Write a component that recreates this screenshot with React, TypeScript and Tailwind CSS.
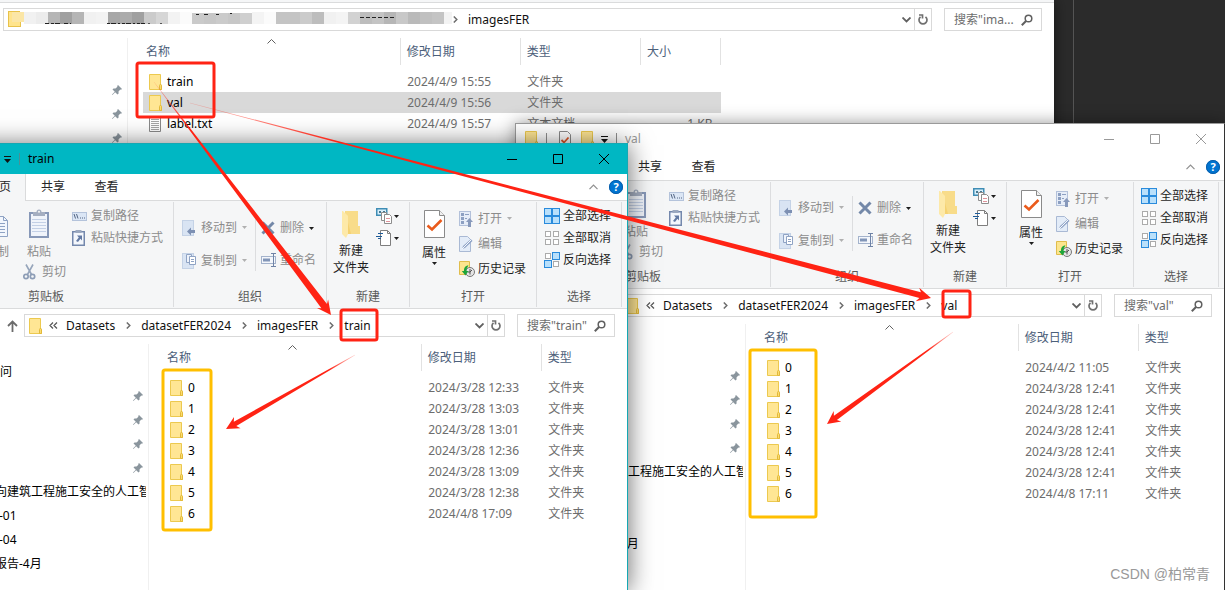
import React, { useId } from 'react';

interface FileRow {
  name: string;
  date: string;
  type: string;
  size?: string;
  kind?: 'folder' | 'text';
  selected?: boolean;
}

interface ExplorerProps {
  title: string;
  active?: boolean;
  hasRibbon?: boolean;
  path: string[];
  searchText: string;
  rows: FileRow[];
  showSize?: boolean;
  className: string;
}

const folderRows = (dates: string[]): FileRow[] =>
  dates.map((date, i) => ({ name: String(i), date, type: '文件夹' }));

const imagesRows: FileRow[] = [
  { name: 'train', date: '2024/4/9 15:55', type: '文件夹' },
  { name: 'val', date: '2024/4/9 15:56', type: '文件夹', selected: true },
  { name: 'label.txt', date: '2024/4/9 15:57', type: '文本文档', size: '1 KB', kind: 'text' },
];

const trainRows = folderRows([
  '2024/3/28 12:33',
  '2024/3/28 13:03',
  '2024/3/28 13:01',
  '2024/3/28 12:36',
  '2024/3/28 13:09',
  '2024/3/28 12:38',
  '2024/4/8 17:09',
]);

const valRows = folderRows([
  '2024/4/2 11:05',
  '2024/3/28 12:41',
  '2024/3/28 12:41',
  '2024/3/28 12:41',
  '2024/3/28 12:41',
  '2024/3/28 12:41',
  '2024/4/8 17:11',
]);

/* ---------- icons ---------- */

const FolderIcon: React.FC = () => (
  <svg className="w-[13px] h-4 shrink-0" viewBox="0 0 13 16" aria-hidden="true">
    <path d="M.5.5h11v10l1 1v4H.5z" fill="#ffe694" stroke="#ecc94f" />
    <path d="M10.500 15.500v-4l1-1.500 1 1.500v4z" fill="#fbdc6f" stroke="#e2b93b" />
  </svg>
);

const TextFileIcon: React.FC = () => (
  <svg className="w-[13px] h-4 shrink-0" viewBox="0 0 13 16" aria-hidden="true">
    <path d="M.5.5h11v15H.5z" fill="#fff" stroke="#8a8a8a" />
    <path d="M2 3.500h8M2 5.500h8M2 7.500h8M2 9.500h8M2 11.500h8M2 13.500h8" stroke="#a5a5a5" />
  </svg>
);

const PinIcon: React.FC = () => (
  <svg className="w-[10px] h-[10px] shrink-0" viewBox="0 0 10 10" aria-hidden="true">
    <path d="M6 0l4 4-1 .8-.7-.2-1.800 1.900.1 2L5.500 9.500 3.200 7.200.4 10 0 9.600l2.800-2.800L.5 4.500 1.500 3.400l2 .1L5.400 1.700 5.200 1z" fill="#8a959d" />
  </svg>
);

const CaretDown: React.FC<{ className?: string }> = ({ className = 'text-[#1e1e1e]' }) => (
  <svg className={`w-[5px] h-[3px] shrink-0 ${className}`} viewBox="0 0 5 3" aria-hidden="true">
    <path d="M0 0h5L2.500 3z" fill="currentColor" />
  </svg>
);

const CrumbArrow: React.FC = () => (
  <svg className="w-[5px] h-[7px] ml-[11px] mr-[10px] shrink-0" viewBox="0 0 5 7" aria-hidden="true">
    <path d="M.8.5l3 3-3 3" fill="none" stroke="#6d6d6d" strokeWidth="1.500" />
  </svg>
);

const ClipboardIcon: React.FC = () => (
  <svg className="w-5 h-[29px]" viewBox="0 0 20 29" aria-hidden="true">
    <rect x="1" y="4" width="18" height="24" fill="#f0f4fb" stroke="#8798b8" strokeWidth="2" />
    <path d="M3 10.500h14M3 13.500h14M3 16.500h14M3 19.500h14M3 22.500h14" stroke="#c3d0e6" />
    <path d="M4 3h3.500a2.500 2.500 0 015 0H16v4H4z" fill="#a4aec1" />
    <circle cx="10" cy="2.800" r="1" fill="#f5f6f7" />
  </svg>
);

const CopyIcon: React.FC = () => (
  <svg className="w-6 h-[29px]" viewBox="0 0 24 29" aria-hidden="true">
    <path d="M1.500 2.500h9l4 4v15h-13z" fill="#eaf0f9" stroke="#9fb0cc" />
    <path d="M9.500 7.500h9l4 4v16h-13z" fill="#f3f7fd" stroke="#8fa3c4" />
    <path d="M18.500 7.500v4h4M12 14.500h8M12 17.500h8M12 20.500h8M12 23.500h8" fill="none" stroke="#8fa3c4" />
  </svg>
);

const ScissorsIcon: React.FC = () => (
  <svg className="w-[13px] h-4" viewBox="0 0 13 16" aria-hidden="true">
    <path d="M3 .5l5.500 10M10 .5l-5.500 10" stroke="#96a5bb" strokeWidth="1.600" />
    <circle cx="3" cy="12.500" r="2.200" fill="none" stroke="#8d9db6" strokeWidth="1.700" />
    <circle cx="9.500" cy="12.500" r="2.200" fill="none" stroke="#8d9db6" strokeWidth="1.700" />
  </svg>
);

const CopyPathIcon: React.FC = () => (
  <svg className="w-[15px] h-[9px]" viewBox="0 0 15 9" aria-hidden="true">
    <rect x=".5" y=".5" width="14" height="8" fill="#dbe6f5" stroke="#b4c3db" />
    <path d="M2 2l1.500 4.500M4.500 2L6 6.500" stroke="#536583" />
    <path d="M8 6h1M10 6h1M12 6h1" stroke="#536583" />
  </svg>
);

const PasteShortcutIcon: React.FC = () => (
  <svg className="w-[13px] h-4" viewBox="0 0 13 16" aria-hidden="true">
    <rect x=".75" y="1.750" width="11.500" height="13.500" fill="#f4f7fc" stroke="#7488ad" strokeWidth="1.500" />
    <rect x="3.500" y="0" width="6" height="3" fill="#9ba8bf" />
    <path d="M5 5.500h5v5L8.400 8.800 6 12 4 11l2.800-3.600z" fill="#6279a3" />
  </svg>
);

const MoveToIcon: React.FC = () => (
  <svg className="w-[13px] h-4" viewBox="0 0 13 16" aria-hidden="true">
    <rect x=".5" y=".5" width="11" height="15" fill="#d9e4f3" stroke="#c4d2e6" />
    <path d="M5 11.500l4-4v2.500h4v3H9v2.500z" fill="#7d90b3" />
  </svg>
);

const CopyToIcon: React.FC = () => (
  <svg className="w-[14px] h-4" viewBox="0 0 14 16" aria-hidden="true">
    <rect x=".5" y=".5" width="11" height="15" fill="#d9e4f3" stroke="#c4d2e6" />
    <path d="M4.500 1.500h5v8h-5z" fill="#eef3fb" stroke="#8fa3c4" />
    <path d="M7.500 3.500h6v8h-6z" fill="#fff" stroke="#8fa3c4" />
    <path d="M9 6.500h3M9 8.500h3" stroke="#8fa3c4" />
  </svg>
);

const DeleteIcon: React.FC = () => (
  <svg className="w-[14px] h-[14px]" viewBox="0 0 14 14" aria-hidden="true">
    <path d="M1.500 1.500l11 11M12.500 1.500l-11 11" stroke="#7388a8" strokeWidth="3" />
  </svg>
);

const RenameIcon: React.FC = () => (
  <svg className="w-4 h-[14px]" viewBox="0 0 16 14" aria-hidden="true">
    <rect x=".5" y="3.500" width="14" height="7" fill="#f4f7fc" stroke="#a4b3cc" />
    <rect x="2" y="5.500" width="7" height="3" fill="#8296b8" />
    <path d="M10 .5h5M10 13.500h5M12.500.5v13" stroke="#6f83a6" />
  </svg>
);

const NewFolderIcon: React.FC = () => (
  <svg className="w-[18px] h-7" viewBox="0 0 18 28" aria-hidden="true">
    <path d="M3 1h13v15h2v8H5z" fill="#f5d271" />
    <path d="M3 1h13v15h2v8H9z" fill="#f8dc8a" />
    <path d="M0 1h1l5 5v18l-2 4-4-4z" fill="#fde9a9" />
  </svg>
);

const NewItemIcon: React.FC = () => (
  <svg className="w-4 h-4" viewBox="0 0 16 16" aria-hidden="true">
    <rect x=".75" y=".75" width="10" height="6.500" fill="#d8eefa" stroke="#3f8db5" strokeWidth="1.500" />
    <path d="M3 3h2v2H3zM7 3h2v2H7z" fill="#46788f" />
    <path d="M5.500 4.500h5v8h-5z" fill="#fff" stroke="#8d8d8d" />
    <path d="M8.500 6.500h5l2 2v7h-7z" fill="#fff" stroke="#8d8d8d" />
    <path d="M10 10.500h4M10 13.500h4" stroke="#e0939b" />
  </svg>
);

const EasyAccessIcon: React.FC = () => (
  <svg className="w-4 h-4" viewBox="0 0 16 16" aria-hidden="true">
    <path d="M4.500.5h7l3 3v12h-10z" fill="#fff" stroke="#7e7e7e" />
    <path d="M11.500.5v3h3" fill="none" stroke="#7e7e7e" />
    <path d="M2 3.500h5M0 6.500h6M2 8.500h3" stroke="#1f5c99" />
  </svg>
);

const PropertiesIcon: React.FC = () => (
  <svg className="w-[21px] h-[28px]" viewBox="0 0 21 28" aria-hidden="true">
    <path d="M.5.5h15l5 5v22H.5z" fill="#fff" stroke="#8a8a8a" />
    <path d="M15.500.5v5h5" fill="#f0f0f0" stroke="#8a8a8a" />
    <path d="M3.500 15.500l4.500 4L17.500 10" fill="none" stroke="#ea5b1c" strokeWidth="2.600" />
  </svg>
);

const OpenIcon: React.FC = () => (
  <svg className="w-[14px] h-4" viewBox="0 0 14 16" aria-hidden="true">
    <rect x=".5" y=".5" width="11" height="14" fill="#e6edf8" stroke="#b3c1da" />
    <path d="M2 2h3v3H2zM2 6h3v3H2zM2 10h3v3H2z" fill="#8da0c2" />
    <path d="M6 3.500h4M6 7.500h2" stroke="#8da0c2" />
    <path d="M10.500 7l3.500 4h-2v5H9v-5H7z" fill="#8799bb" />
  </svg>
);

const EditIcon: React.FC = () => (
  <svg className="w-[14px] h-4" viewBox="0 0 14 16" aria-hidden="true">
    <path d="M.5.5h8l3 3v12H.5z" fill="#e3ecf8" stroke="#a9b9d4" />
    <path d="M3 13l1-3 8-7 1.500 2L6 12z" fill="#91a5c7" />
    <path d="M3 13l9.500-9.500" stroke="#f5f8fd" />
  </svg>
);

const HistoryIcon: React.FC = () => (
  <svg className="w-4 h-4" viewBox="0 0 16 16" aria-hidden="true">
    <path d="M.5.5h10v13H.5z" fill="#fce58e" stroke="#e0bd4c" />
    <circle cx="11" cy="11" r="4.500" fill="#e5e5e5" stroke="#777" />
    <path d="M11 8v3l2-2M9 11h2M11 11v2.500" stroke="#555" fill="none" />
    <path d="M9.500 4.500C6 4.500 4.800 7 5 10H2.800l3.600 4.500L9.500 10H7.500c0-2 .5-3.500 2-5.500z" fill="#1ea53a" />
  </svg>
);

const SelectIcon: React.FC<{ mode: 'all' | 'none' | 'invert' }> = ({ mode }) => {
  const cells = [[0, 0], [8, 0], [0, 8], [8, 8]];
  return (
    <svg className="w-4 h-4" viewBox="0 0 16 16" aria-hidden="true">
      {cells.map(([x, y], i) => {
        const on = mode === 'all' || (mode === 'invert' && (i === 1 || i === 2));
        return on ? (
          <rect key={i} x={x + 0.5} y={y + 0.5} width="7" height="7" fill="#b9e0fb" stroke="#2a8bdc" />
        ) : (
          <rect key={i} x={x + 1.5} y={y + 1.5} width="5" height="5" fill="#fff" stroke="#ababab" />
        );
      })}
    </svg>
  );
};

/* ---------- ribbon ---------- */

const RibbonGroup: React.FC<{ label: string; className: string; children: React.ReactNode }> = ({ label, className, children }) => (
  <div className={`flex flex-col my-px border-r border-[#dcdddf] shrink-0 ${className}`}>
    <div className="flex flex-1">{children}</div>
    <div className="h-4 leading-4 mb-[2px] text-center text-[#5a5a5a]">{label}</div>
  </div>
);

interface RibbonButtonProps {
  icon: React.ReactNode;
  label: string;
  disabled?: boolean;
  caret?: boolean;
  className?: string;
}

const RibbonButton: React.FC<RibbonButtonProps> = ({ icon, label, disabled, caret, className = 'h-[22px]' }) => (
  <button
    type="button"
    disabled={disabled}
    className={`flex items-center whitespace-nowrap ${disabled ? 'text-[#8c8c8c]' : 'text-[#1e1e1e]'} ${className}`}
  >
    <span className="w-[19px] flex items-center shrink-0">{icon}</span>
    {label}
    {caret && <span className="ml-[5px]"><CaretDown className={disabled ? 'text-[#b0b0b0]' : 'text-[#1e1e1e]'} /></span>}
  </button>
);

const Ribbon: React.FC = () => (
  <div className="flex h-[108px] bg-[#f5f6f7] border-b border-[#dadbdc] shrink-0">
    <RibbonGroup label="剪贴板" className="w-[255px]">
      <div className="flex flex-1 justify-end pr-[10px] pt-[3px]">
        <button type="button" disabled className="w-[46px] flex flex-col items-center self-start pt-1 text-[#8c8c8c]">
          <CopyIcon />
          <span className="mt-[6px] leading-4">复制</span>
        </button>
        <div className="w-[52px]">
          <button type="button" disabled className="w-[38px] flex flex-col items-center pt-1 text-[#8c8c8c]">
            <ClipboardIcon />
            <span className="mt-[6px] leading-4">粘贴</span>
          </button>
          <RibbonButton icon={<ScissorsIcon />} label="剪切" disabled className="h-[22px] pl-[3px] mt-px" />
        </div>
        <div>
          <RibbonButton icon={<CopyPathIcon />} label="复制路径" disabled />
          <RibbonButton icon={<PasteShortcutIcon />} label="粘贴快捷方式" disabled />
        </div>
      </div>
    </RibbonGroup>

    <RibbonGroup label="组织" className="w-[153px]">
      <div className="pt-[9px] pl-2">
        <RibbonButton icon={<MoveToIcon />} label="移动到" disabled caret className="h-[33px]" />
        <RibbonButton icon={<CopyToIcon />} label="复制到" disabled caret className="h-[33px]" />
      </div>
      <div className="mt-[14px] ml-2 pl-[5px] h-[55px] border-l border-[#dcdddf]">
        <button type="button" className="flex items-center h-6 whitespace-nowrap text-[#8c8c8c]">
          <span className="w-[19px] flex items-center"><DeleteIcon /></span>
          删除
          <span className="ml-[5px]"><CaretDown /></span>
        </button>
        <RibbonButton icon={<RenameIcon />} label="重命名" disabled className="h-6 mt-2" />
      </div>
    </RibbonGroup>

    <RibbonGroup label="新建" className="w-[83px]">
      <button type="button" className="w-[48px] flex flex-col items-center self-start pt-2 text-[#1e1e1e]">
        <NewFolderIcon />
        <span className="mt-1 leading-[17px]">新建<br />文件夹</span>
      </button>
      <div className="pt-[3px] pl-px">
        <button type="button" aria-label="新建项目" className="flex items-center gap-[2px] h-[22px]">
          <NewItemIcon />
          <CaretDown />
        </button>
        <button type="button" aria-label="轻松访问" className="flex items-center gap-[2px] h-[22px]">
          <EasyAccessIcon />
          <CaretDown />
        </button>
      </div>
    </RibbonGroup>

    <RibbonGroup label="打开" className="w-[127px]">
      <button type="button" className="w-[48px] flex flex-col items-center self-start pt-2 text-[#1e1e1e]">
        <PropertiesIcon />
        <span className="mt-[7px] leading-4">属性</span>
        <CaretDown className="mt-px text-[#1e1e1e]" />
      </button>
      <div className="pt-1 pl-px">
        <RibbonButton icon={<OpenIcon />} label="打开" disabled caret className="h-[25px]" />
        <RibbonButton icon={<EditIcon />} label="编辑" disabled className="h-[25px]" />
        <RibbonButton icon={<HistoryIcon />} label="历史记录" className="h-[25px]" />
      </div>
    </RibbonGroup>

    <RibbonGroup label="选择" className="w-[85px]">
      <div className="pt-[3px] pl-[7px]">
        <RibbonButton icon={<SelectIcon mode="all" />} label="全部选择" />
        <RibbonButton icon={<SelectIcon mode="none" />} label="全部取消" />
        <RibbonButton icon={<SelectIcon mode="invert" />} label="反向选择" />
      </div>
    </RibbonGroup>
  </div>
);

/* ---------- window parts ---------- */

const TitleBar: React.FC<{ title: string; active?: boolean }> = ({ title, active }) => (
  <div className={`flex items-center h-[30px] shrink-0 ${active ? 'bg-[#00b7c3] text-black' : 'bg-white text-[#999]'}`}>
    <div className="flex items-center flex-1 pl-[9px]">
      <FolderIcon />
      <span className="w-px h-3 bg-[#8f8f8f] mx-2" />
      <button type="button" aria-label="属性" className="ml-1">
        <svg className="w-3 h-4" viewBox="0 0 12 16" aria-hidden="true">
          <path d="M.5.5h8l3 3v12H.5z" fill="#fff" stroke="#8a8a8a" />
          <path d="M2.500 9l2.500 2.500L9.500 6.500" fill="none" stroke="#e0582a" strokeWidth="1.800" />
        </svg>
      </button>
      <button type="button" aria-label="新建文件夹" className="ml-[10px]"><FolderIcon /></button>
      <button type="button" aria-label="自定义快速访问工具栏" className="ml-[7px]">
        <svg className="w-[7px] h-[7px]" viewBox="0 0 7 7" aria-hidden="true">
          <path d="M0 0h7v1H0zM0 3h7L3.500 7z" fill="#111" />
        </svg>
      </button>
      <span className={`w-px h-3 mx-2 ${active ? 'bg-[#4d8f94]' : 'bg-[#8f8f8f]'}`} />
      <h2>{title}</h2>
    </div>
    <button type="button" aria-label="最小化" className="w-[46px] h-full flex items-center justify-center">
      <svg className="w-[10px] h-[10px]" viewBox="0 0 10 10" stroke="currentColor" aria-hidden="true"><path d="M0 5.500h10" /></svg>
    </button>
    <button type="button" aria-label="最大化" className="w-[46px] h-full flex items-center justify-center">
      <svg className="w-[10px] h-[10px]" viewBox="0 0 10 10" stroke="currentColor" fill="none" aria-hidden="true"><path d="M.5.5h9v9h-9z" /></svg>
    </button>
    <button type="button" aria-label="关闭" className="w-[46px] h-full flex items-center justify-center">
      <svg className="w-[10px] h-[10px]" viewBox="0 0 10 10" stroke="currentColor" aria-hidden="true"><path d="M0 0l10 10M10 0L0 10" /></svg>
    </button>
  </div>
);

const TabBar: React.FC = () => (
  <div className="flex h-[27px] shrink-0 bg-white text-[#262626]">
    <div className="w-[54px] border-b border-[#dadbdc]" />
    <button type="button" className="w-[53px] pb-px bg-[#f5f6f7] border-r border-[#dadbdc]">主页</button>
    <button type="button" className="w-[54px] border-b border-[#dadbdc]">共享</button>
    <button type="button" className="w-[53px] border-b border-[#dadbdc]">查看</button>
    <div className="flex flex-1 items-center justify-end gap-[11px] pr-1 border-b border-[#dadbdc]">
      <button type="button" aria-label="折叠功能区">
        <svg className="w-[9px] h-[6px]" viewBox="0 0 9 6" fill="none" stroke="#8f8f8f" strokeWidth="1.200" aria-hidden="true"><path d="M.5 5.200l4-4 4 4" /></svg>
      </button>
      <button type="button" aria-label="帮助" className="w-[14px] h-[14px] rounded-full bg-[#0074d1] outline outline-[#0a5da8] -outline-offset-1 text-white font-bold text-[11px] leading-[14px]">?</button>
    </div>
  </div>
);

// pixelated strip over the private part of the path
const MOSAIC = [
  '#fbe6a6', '#f1f1f1', '#ececec', '#b5b5b5', '#a0a0a0', '#b5b5b5', '#f1f1f1', '#f3f3f3', '#a7a7a7', '#acacac', '#a0a0a0',
  '#cbcbcb', '#d6d6d6', '#f3f3f3', '#fbfbfb', '#cacaca', '#c7c7c7', '#cbcbcb', '#c7c7c7', '#cfcfcf', '#f4f4f4', '#fbfbfb',
  '#c4c4c4', '#c4c4c4', '#cbcbcb', '#bdbdbd', '#f1f1f1', '#f4f4f4', '#d2d2d2', '#bdbdbd', '#c4c4c4', '#b6b6b6', '#c8c8c8',
  '#bababa', '#c0c0c0', '#c4c4c4', '#f3f3f3',
];

const MosaicPath: React.FC = () => (
  <svg className="w-[448px] h-[21px] shrink-0" viewBox="0 0 448 21" shapeRendering="crispEdges" aria-hidden="true">
    <path d="M4.500 2.500h11v10l1 1v4h-12z" fill="#ffe48c" stroke="#e8c24a" />
    {MOSAIC.map((fill, i) => (
      <rect key={i} x={8 + i * 12} y="3" width={i === 36 ? 8 : 12} height={i === 0 ? 10 : 12} fill={fill} />
    ))}
    <path d="M41 14.500h26" stroke="#222" strokeDasharray="4 2 3 1 5 4" />
    <path d="M103 14.500h38" stroke="#222" strokeDasharray="3 1 5 2 2 2" />
    <path d="M144 14.500h2M156 14.500h2" stroke="#555" />
    <path d="M188 3.500h60" stroke="#fff" />
    <path d="M192 5.500h3M200 5.500h4M212 5.500h3M226 4.500h2" stroke="#222" />
    <path d="M356 8.500h34" stroke="#222" strokeDasharray="4 2" />
  </svg>
);

const AddressRow: React.FC<{ path: string[]; searchText: string; masked?: boolean }> = ({ path, searchText, masked }) => (
  <div className="flex items-center h-[33px] pl-[88px] pr-3 shrink-0">
    <button type="button" aria-label="上移" className="w-[17px] flex">
      <svg className="w-[11px] h-3" viewBox="0 0 11 12" fill="none" stroke="#6b6b6b" strokeWidth="1.800" aria-hidden="true"><path d="M5.500 12V1.500M1 6l4.500-4.500L10 6" /></svg>
    </button>
    <div className="flex flex-1 h-[23px] border border-[#d9d9d9] text-[#111]">
      {masked ? (
        <MosaicPath />
      ) : (
        <span className="flex items-center pl-1">
          <FolderIcon />
          <svg className="w-[9px] h-[7px] ml-[7px] mr-2" viewBox="0 0 9 7" fill="none" stroke="#555" strokeWidth="1.200" aria-hidden="true"><path d="M4 .5l-3 3 3 3M8 .5l-3 3 3 3" /></svg>
        </span>
      )}
      <nav className="flex flex-1 items-center" aria-label="路径">
        {path.map((part, i) => (
          <React.Fragment key={part}>
            {(i > 0 || masked) && <span className={masked ? '-ml-[10px]' : ''}><CrumbArrow /></span>}
            <a href={`#${part}`}>{part}</a>
          </React.Fragment>
        ))}
      </nav>
      <button type="button" aria-label="以前的位置" className="w-4 flex items-center justify-center">
        <svg className="w-[9px] h-[6px]" viewBox="0 0 9 6" fill="none" stroke="#606060" strokeWidth="1.800" aria-hidden="true"><path d="M.5.5l4 4 4-4" /></svg>
      </button>
      <button type="button" aria-label="刷新" className="w-[17px] flex items-center justify-center border-l border-[#d9d9d9]">
        <svg className="w-[10px] h-[11px]" viewBox="0 0 10 11" fill="none" stroke="#707070" strokeWidth="1.700" aria-hidden="true">
          <path d="M7.500 2.800a4 4 0 11-5 0" />
          <path d="M1 1h3.500v3.500" />
        </svg>
      </button>
    </div>
    <div className="flex items-center w-[98px] h-[23px] ml-3 pl-[9px] pr-2 border border-[#d9d9d9]">
      <input
        type="text"
        aria-label="搜索"
        placeholder={searchText}
        className="flex-1 min-w-0 bg-transparent outline-none placeholder:text-[#6d6d6d]"
      />
      <svg className="w-3 h-3 shrink-0" viewBox="0 0 12 12" fill="none" stroke="#606060" aria-hidden="true">
        <circle cx="7.500" cy="4.500" r="3.300" strokeWidth="1.500" />
        <path d="M5 7L.8 11.200" strokeWidth="2" />
      </svg>
    </div>
  </div>
);

const NavPane: React.FC = () => (
  <nav className="w-[230px] shrink-0 mt-[2px] pt-4 pr-[2px] border-r border-[#f0f0f0] text-black overflow-hidden">
    <div className="h-6 flex items-center pl-[45px]">快速访问</div>
    {[0, 1, 2, 3].map(i => (
      <div key={i} className="h-6 flex items-center justify-end pb-px pr-[3px]"><PinIcon /></div>
    ))}
    <div className="h-6 flex items-center pl-16 whitespace-nowrap overflow-hidden">面向建筑工程施工安全的人工智能</div>
    <div className="h-6 flex items-center pl-20">-01</div>
    <div className="h-6 flex items-center pl-20">-04</div>
    <div className="h-6 flex items-center pl-[76px]">报告-4月</div>
  </nav>
);

const FileTable: React.FC<{ rows: FileRow[]; showSize?: boolean }> = ({ rows, showSize }) => (
  <div className="flex-1 min-w-0 overflow-hidden pl-[15px] pt-[2px]">
    <table className={`table-fixed border-collapse text-left ${showSize ? 'w-[578px]' : 'w-[498px]'}`}>
      <thead>
        <tr className="h-[27px] text-[#4c607a]">
          <th className="w-[257px] pl-[3px] font-normal relative">
            名称
            <svg className="absolute left-1/2 top-px -ml-1 w-[9px] h-[5px]" viewBox="0 0 9 5" fill="none" stroke="#606060" aria-hidden="true"><path d="M.5 4.500l4-4 4 4" /></svg>
          </th>
          <th className="w-[120px] pl-[6px] font-normal border-l border-[#e2e2e2]">修改日期</th>
          <th className={`w-[120px] pl-[6px] font-normal border-l border-[#e2e2e2] ${showSize ? '' : 'border-r'}`}>类型</th>
          {showSize && <th className="w-20 pl-[6px] font-normal border-x border-[#e2e2e2]">大小</th>}
        </tr>
      </thead>
      <tbody className="text-[#6d6d6d]">
        <tr className="h-[6px]" aria-hidden="true" />
        {rows.map(row => (
          <tr key={row.name} className={`h-[21px] ${row.selected ? 'bg-[#d9d9d9]' : ''}`}>
            <td className="pl-[6px]">
              <a href={`#${row.name}`} className="flex items-center gap-[5px] text-black">
                {row.kind === 'text' ? <TextFileIcon /> : <FolderIcon />}
                {row.name}
              </a>
            </td>
            <td className="pl-[7px] whitespace-nowrap">{row.date}</td>
            <td className="pl-[7px] whitespace-nowrap">{row.type}</td>
            {showSize && <td className="pr-2 text-right">{row.size}</td>}
          </tr>
        ))}
      </tbody>
    </table>
  </div>
);

const ExplorerWindow: React.FC<ExplorerProps> = ({ title, active, hasRibbon = true, path, searchText, rows, showSize, className }) => (
  <section aria-label={title} className={`absolute bottom-0 flex flex-col bg-white overflow-hidden ${className}`}>
    {hasRibbon ? (
      <>
        <TitleBar title={title} active={active} />
        <TabBar />
        <Ribbon />
      </>
    ) : (
      <div className="h-[3px] bg-[#f5f6f7] border-b border-[#dadbdc] shrink-0" />
    )}
    <AddressRow path={path} searchText={searchText} masked={!hasRibbon} />
    <div className="flex flex-1">
      <NavPane />
      <FileTable rows={rows} showSize={showSize} />
    </div>
  </section>
);

/* ---------- annotations ---------- */

interface ArrowProps {
  from: [number, number];
  to: [number, number];
  body: number;
  head: number;
}

// tapered arrow that fades in from its tail
const Arrow: React.FC<ArrowProps> = ({ from, to, body, head }) => {
  const id = useId();
  const [x1, y1] = from;
  const [x2, y2] = to;
  const len = Math.hypot(x2 - x1, y2 - y1);
  const ux = (x2 - x1) / len;
  const uy = (y2 - y1) / len;
  const at = (back: number, side: number) =>
    `${(x2 - ux * back - uy * side).toFixed(1)},${(y2 - uy * back + ux * side).toFixed(1)}`;
  const points = [
    at(len, 0.2), at(head * 0.8, body / 2), at(head, head / 2), at(0, 0),
    at(head, -head / 2), at(head * 0.8, -body / 2), at(len, -0.2),
  ].join(' ');
  return (
    <>
      <linearGradient id={id} gradientUnits="userSpaceOnUse" x1={x1} y1={y1} x2={x2} y2={y2}>
        <stop offset="0" stopColor="#ff2314" stopOpacity="0.2" />
        <stop offset="0.2" stopColor="#ff2314" />
      </linearGradient>
      <polygon points={points} fill={`url(#${id})`} />
    </>
  );
};

const Annotations: React.FC = () => (
  <svg className="absolute left-0 top-0 w-[1225px] h-[590px] pointer-events-none" viewBox="0 0 1225 590" fill="none" aria-hidden="true">
    <g stroke="#ff2314" strokeWidth="3">
      <rect x="137" y="63" width="77" height="54" rx="2" />
      <rect x="341" y="310" width="36" height="30" rx="2" />
      <rect x="943" y="291" width="27" height="26" rx="2" />
    </g>
    <g stroke="#ffbf00" strokeWidth="3">
      <rect x="163" y="370" width="48" height="160" rx="2" />
      <rect x="750" y="350" width="66" height="167" rx="2" />
    </g>
    <Arrow from={[154, 82]} to={[331, 315]} body={7} head={14} />
    <Arrow from={[190, 103]} to={[931, 298]} body={6} head={14} />
    <Arrow from={[355, 355]} to={[226, 429]} body={5} head={13} />
    <Arrow from={[953, 332]} to={[827, 424]} body={5} head={13} />
  </svg>
);

export default function App() {
  return (
    <main className="relative min-h-screen w-full overflow-hidden bg-[#2b2b2b] text-[12px] leading-4 font-[family-name:'Noto_Sans','Noto_Sans_CJK_SC',sans-serif]">
      <div className="absolute inset-y-0 left-[1073px] w-px bg-[#555]" />
      <ExplorerWindow
        title="imagesFER"
        hasRibbon={false}
        path={['imagesFER']}
        searchText={'搜索"ima...'}
        rows={imagesRows}
        showSize
        className="-left-[103px] top-0 w-[1157px] border-l border-[#aaa] shadow-[0_0_14px_rgba(0,0,0,0.5)]"
      />
      <ExplorerWindow
        title="val"
        path={['Datasets', 'datasetFER2024', 'imagesFER', 'val']}
        searchText={'搜索"val"'}
        rows={valRows}
        className="left-[515px] top-[123px] w-[710px] border border-b-0 border-[#9a9a9a] border-r-[#333] shadow-[0_0_16px_rgba(0,0,0,0.4)]"
      />
      <ExplorerWindow
        title="train"
        active
        path={['Datasets', 'datasetFER2024', 'imagesFER', 'train']}
        searchText={'搜索"train"'}
        rows={trainRows}
        className="-left-[82px] top-[143px] w-[710px] border border-b-0 border-[#15a8b3] shadow-[0_2px_24px_rgba(0,0,0,0.6)]"
      />
      <Annotations />
      <p className="absolute right-[15px] bottom-[6px] text-[14px] leading-5 text-[#999] font-[family-name:'Liberation_Sans','Noto_Sans_CJK_SC',sans-serif]">CSDN @柏常青</p>
    </main>
  );
}
